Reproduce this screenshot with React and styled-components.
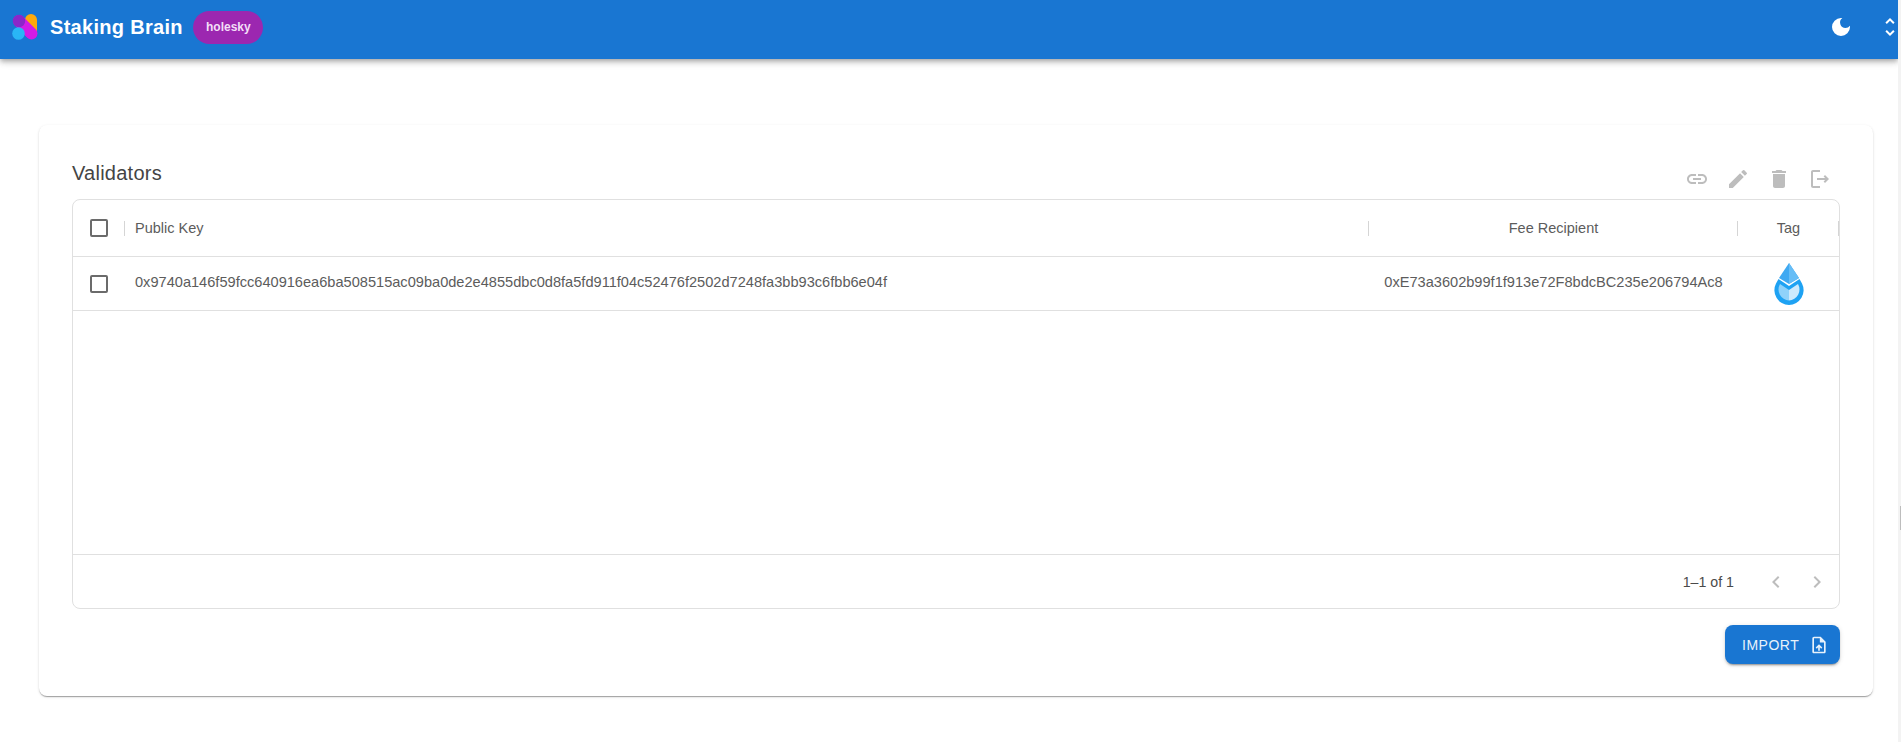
import React from "react";
import styled, { createGlobalStyle } from "styled-components";

const Global = createGlobalStyle`
  html, body { margin: 0; padding: 0; background: #fff; overflow: hidden; }
  body { font-family: "Liberation Sans", Arial, sans-serif; }
`;

const Page = styled.div`
  width: 1901px;
  height: 742px;
  display: flex;
  overflow: hidden;
`;
const Content = styled.div`
  width: 1898px;
  flex: none;
  display: flex;
  flex-direction: column;
`;
const ScrollTrack = styled.div`
  flex: 1;
  background: #f3f3f3;
  padding: 506px 0 0 2px;
`;
const ScrollThumb = styled.div`
  height: 24px;
  background: #bdbdbd;
`;
const AppBar = styled.header`
  height: 54px;
  flex: none;
  background: #1976d2;
  color: #fff;
  display: flex;
  align-items: center;
  padding: 0 2px 5px 12px;
  box-shadow: 0 2px 4px -1px rgba(0,0,0,.2), 0 4px 5px 0 rgba(0,0,0,.14), 0 1px 10px 0 rgba(0,0,0,.12);
`;
const Brand = styled.div`
  margin-left: 12px;
  font: 700 20px "Liberation Sans", Arial, sans-serif;
  letter-spacing: 0.3px;
`;
const NetChip = styled.span`
  margin-left: 10.5px;
  width: 70px;
  height: 33px;
  border-radius: 17px;
  background: #9c27b0;
  display: flex;
  align-items: center;
  justify-content: center;
  font: 700 12px "Liberation Sans", Arial, sans-serif;
  color: #f3dff7;
`;
const Spacer = styled.div`flex: 1;`;
const BarIcons = styled.div`
  display: flex;
  align-items: center;
  gap: 31px;
`;
const Main = styled.main`
  flex: 1;
  padding: 66px 25px 0 39px;
`;
const Card = styled.section`
  height: 571px;
  box-sizing: border-box;
  border-radius: 8px;
  background: #fff;
  padding: 35px 33px 0;
  box-shadow: 0 2px 1px -1px rgba(0,0,0,.2), 0 1px 1px 0 rgba(0,0,0,.14), 0 1px 3px 0 rgba(0,0,0,.12);
`;
const TitleRow = styled.div`
  height: 39px;
  display: flex;
  align-items: flex-start;
  justify-content: space-between;
`;
const Title = styled.h2`
  margin: 1px 0 0;
  font: 400 20px/24px "Liberation Sans", Arial, sans-serif;
  letter-spacing: 0.25px;
  color: #444;
`;
const Actions = styled.div`
  display: flex;
  gap: 17px;
  padding: 7px 8px 0 0;
  color: #bdbdbd;
`;
const Table = styled.div`
  height: 410px;
  box-sizing: border-box;
  border: 1px solid #e0e0e0;
  border-radius: 8px;
  display: flex;
  flex-direction: column;
`;
const columns = "grid-template-columns: 52px 1244px 369px 1fr;";
const HeaderRow = styled.div`
  display: grid;
  ${columns}
  height: 56px;
  flex: none;
  align-items: center;
  border-bottom: 1px solid #e0e0e0;
  font-size: 14.5px;
  color: #5c5c5c;
`;
const DataRow = styled.div`
  display: grid;
  ${columns}
  height: 53px;
  flex: none;
  align-items: center;
  border-bottom: 1px solid #e0e0e0;
  font-size: 14.6px;
  color: #5c5c5c;
`;
const Empty = styled.div`flex: 1;`;
const CheckCell = styled.div`
  display: flex;
  justify-content: center;
`;
const CheckBox = styled.span`
  width: 18px;
  height: 18px;
  box-sizing: border-box;
  border: 2px solid #6b6b6b;
  border-radius: 2px;
  display: block;
`;
const HeadCell = styled.div`
  position: relative;
  height: 100%;
  display: flex;
  align-items: center;
  justify-content: ${p => (p.$center ? "center" : "flex-start")};
  padding-left: ${p => (p.$center ? "0" : "10px")};
  &::after {
    content: "";
    position: absolute;
    right: 0;
    top: 21px;
    height: 15px;
    width: 1px;
    background: #d5d5d5;
  }
`;
const FirstHead = styled(HeadCell)`
  &::before {
    content: "";
    position: absolute;
    left: -1px;
    top: 21px;
    height: 15px;
    width: 1px;
    background: #d5d5d5;
  }
`;
const KeyCell = styled.div`
  padding-left: 10px;
  margin-top: -3px;
  white-space: nowrap;
`;
const RecipientCell = styled.div`
  text-align: center;
  margin-top: -3px;
  white-space: nowrap;
`;
const TagCell = styled.div`
  display: flex;
  justify-content: center;
`;
const Footer = styled.div`
  height: 53px;
  flex: none;
  border-top: 1px solid #e0e0e0;
  display: flex;
  align-items: center;
  justify-content: flex-end;
  padding-right: 10px;
`;
const Range = styled.span`
  margin-right: 30px;
  font-size: 14.2px;
  color: #4a4a4a;
`;
const Pager = styled.div`
  display: flex;
  gap: 17px;
  color: #bdbdbd;
`;
const ButtonRow = styled.div`
  display: flex;
  justify-content: flex-end;
  padding-top: 16px;
`;
const ImportButton = styled.button`
  width: 115px;
  height: 39px;
  border: 0;
  border-radius: 8px;
  padding: 0 0 0 17px;
  background: #1976d2;
  color: #e8f2fb;
  display: flex;
  align-items: center;
  gap: 10px;
  font: 400 14px "Liberation Sans", Arial, sans-serif;
  letter-spacing: 0.5px;
  box-shadow: 0 3px 1px -2px rgba(0,0,0,.2), 0 2px 2px 0 rgba(0,0,0,.14), 0 1px 5px 0 rgba(0,0,0,.12);
`;

const Icon = ({ size = 24, children }) => (
  <svg width={size} height={size} viewBox="0 0 24 24" fill="currentColor" aria-hidden="true">{children}</svg>
);

const Logo = () => (
  <svg width="26" height="26" viewBox="0 0 26 26" aria-hidden="true">
    <path d="M13 6a6 6 0 0 1 12 0v13H19z" fill="#ffa90a" />
    <line x1="7" y1="7" x2="19.5" y2="19.5" stroke="#d31be6" strokeWidth="12" strokeLinecap="round" />
    <circle cx="7" cy="7" r="6.2" fill="#8a27c9" />
    <circle cx="6.5" cy="19.5" r="6.3" fill="#29b6f6" />
  </svg>
);

const Drop = () => (
  <svg width="30" height="42" viewBox="0 0 30 42" aria-hidden="true">
    <path d="M15 0 L25 15 L15 21 L5 15Z" fill="#3fa9f2" />
    <path d="M15 0 L25 15 L15 21Z" fill="#66bdf6" />
    <path d="M4.5 16 L2 20.5 A14.8 14.8 0 0 0 15 42 A14.8 14.8 0 0 0 28 20.5 L25.5 16 L15 23Z" fill="#1ea2f3" />
    <path d="M6 21 L15 27 V37.5 A11 11 0 0 1 6 21Z" fill="#8fd2fa" />
    <path d="M24 21 L15 27 V37.5 A11 11 0 0 0 24 21Z" fill="#cdeafd" />
  </svg>
);

const UpDown = () => (
  <svg width="12" height="24" viewBox="6 0 12 24" fill="currentColor" aria-hidden="true">
    <path d="M12 5.83 15.17 9l1.41-1.41L12 3 7.41 7.59 8.83 9 12 5.83zm0 12.34L8.83 15l-1.41 1.41L12 21l4.59-4.59L15.17 15 12 18.17z" />
  </svg>
);

export default function App() {
  return (
    <Page>
      <Global />
      <Content>
        <AppBar>
          <Logo />
          <Brand>Staking Brain</Brand>
          <NetChip>holesky</NetChip>
          <Spacer />
          <BarIcons>
            <Icon><path d="M12 3a9 9 0 1 0 9 9c0-.46-.04-.92-.1-1.36a5.39 5.39 0 0 1-4.4 2.26 5.4 5.4 0 0 1-3.14-9.8c-.44-.06-.9-.1-1.36-.1z" /></Icon>
            <UpDown />
          </BarIcons>
        </AppBar>
        <Main>
          <Card>
            <TitleRow>
              <Title>Validators</Title>
              <Actions>
                <Icon><path d="M3.9 12c0-1.71 1.39-3.1 3.1-3.1h4V7H7c-2.76 0-5 2.24-5 5s2.24 5 5 5h4v-1.9H7c-1.71 0-3.1-1.39-3.1-3.1zM8 13h8v-2H8v2zm9-6h-4v1.9h4c1.71 0 3.1 1.39 3.1 3.1s-1.39 3.1-3.1 3.1h-4V17h4c2.76 0 5-2.24 5-5s-2.24-5-5-5z" /></Icon>
                <Icon><path d="M3 17.25V21h3.75L17.81 9.94l-3.75-3.75L3 17.25zM20.71 7.04a.996.996 0 0 0 0-1.41l-2.34-2.34a.996.996 0 0 0-1.41 0l-1.83 1.83 3.75 3.75 1.83-1.83z" /></Icon>
                <Icon><path d="M6 19c0 1.1.9 2 2 2h8c1.1 0 2-.9 2-2V7H6v12zM19 4h-3.5l-1-1h-5l-1 1H5v2h14V4z" /></Icon>
                <Icon><path d="m17 8-1.41 1.41L17.17 11H9v2h8.17l-1.58 1.58L17 16l4-4-4-4zM5 5h7V3H5c-1.1 0-2 .9-2 2v14c0 1.1.9 2 2 2h7v-2H5V5z" /></Icon>
              </Actions>
            </TitleRow>
            <Table>
              <HeaderRow>
                <CheckCell><CheckBox /></CheckCell>
                <FirstHead>Public Key</FirstHead>
                <HeadCell $center>Fee Recipient</HeadCell>
                <HeadCell $center>Tag</HeadCell>
              </HeaderRow>
              <DataRow>
                <CheckCell><CheckBox /></CheckCell>
                <KeyCell>0x9740a146f59fcc640916ea6ba508515ac09ba0de2e4855dbc0d8fa5fd911f04c52476f2502d7248fa3bb93c6fbb6e04f</KeyCell>
                <RecipientCell>0xE73a3602b99f1f913e72F8bdcBC235e206794Ac8</RecipientCell>
                <TagCell><Drop /></TagCell>
              </DataRow>
              <Empty />
              <Footer>
                <Range>1–1 of 1</Range>
                <Pager>
                  <Icon><path d="M15.41 7.41 14 6l-6 6 6 6 1.41-1.41L10.83 12z" /></Icon>
                  <Icon><path d="M10 6 8.59 7.41 13.17 12l-4.58 4.59L10 18l6-6z" /></Icon>
                </Pager>
              </Footer>
            </Table>
            <ButtonRow>
              <ImportButton>
                IMPORT
                <Icon size={20}><path d="M14 2H6c-1.1 0-1.99.9-1.99 2L4 20c0 1.1.89 2 1.99 2H18c1.1 0 2-.9 2-2V8l-6-6zm4 18H6V4h7v5h5v11zM8 15.01l1.41 1.41L11 14.84V19h2v-4.16l1.59 1.59L16 15.01 12.01 11 8 15.01z" /></Icon>
              </ImportButton>
            </ButtonRow>
          </Card>
        </Main>
      </Content>
      <ScrollTrack>
        <ScrollThumb />
      </ScrollTrack>
    </Page>
  );
}
